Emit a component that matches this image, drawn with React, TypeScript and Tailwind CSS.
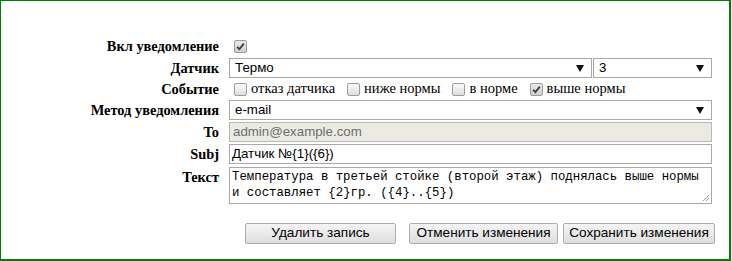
import React from "react";

const Check = ({ checked }: { checked?: boolean }) => (
  <span
    className={
      "inline-flex h-[13px] w-[13px] shrink-0 items-center justify-center rounded-[2px] border border-[#9c9c9c] " +
      (checked ? "bg-linear-to-b from-[#e8e8e8] to-[#cfcfcf]" : "bg-linear-to-b from-[#fbfbfb] to-[#dedede]")
    }
  >
    {checked && (
      <svg width="9" height="9" viewBox="0 0 9 9">
        <path d="M1.2 4.8 L3.4 7.2 L7.8 1.6" fill="none" stroke="#3a3a3a" strokeWidth="1.8" />
      </svg>
    )}
  </span>
);

const Arrow = () => (
  <svg width="8" height="7" viewBox="0 0 8 7" className="shrink-0">
    <path d="M0 0 H8 L4 7 Z" fill="#111" />
  </svg>
);

const Label = ({ children, className = "" }: { children: React.ReactNode; className?: string }) => (
  <div
    className={
      "w-[218px] shrink-0 text-right [font-family:'Liberation_Serif',serif] text-[14.4px] font-bold leading-[20px] text-black " +
      className
    }
  >
    {children}
  </div>
);

const Select = ({ value, className = "" }: { value: string; className?: string }) => (
  <div
    className={
      "flex h-[20px] items-center justify-between border border-[#a9a9a9] bg-white pl-[5px] pr-[7px] [font-family:'Liberation_Sans',Arial,sans-serif] text-[13.3px] text-black " +
      className
    }
  >
    <span>{value}</span>
    <Arrow />
  </div>
);

const Opt = ({ text, checked, first }: { text: string; checked?: boolean; first?: boolean }) => (
  <div className={"flex items-center " + (first ? "ml-[5px]" : "ml-[12px]")}>
    <Check checked={checked} />
    <span className="ml-[4px] [font-family:'Liberation_Serif',serif] text-[14.5px] text-black">{text}</span>
  </div>
);

const Btn = ({ text, className = "" }: { text: string; className?: string }) => (
  <div
    className={
      "flex h-[21px] items-center justify-center rounded-[2px] border border-[#adadad] bg-linear-to-b from-[#f5f5f5] to-[#dedede] [font-family:'Liberation_Sans',Arial,sans-serif] text-[13.6px] text-black " +
      className
    }
  >
    {text}
  </div>
);

export default function App() {
  return (
    <div className="box-border h-[261px] w-[731px] border-t border-l border-r-2 border-b-2 border-[#008000] bg-white pt-[35px]">
      <div className="flex h-[20px] items-center">
        <Label>Вкл уведомление</Label>
        <div className="ml-[15px] flex items-center">
          <Check checked />
        </div>
      </div>

      <div className="mt-[2px] flex h-[20px] items-center">
        <Label>Датчик</Label>
        <div className="ml-[10px] flex w-[483px] gap-[1px]">
          <Select value="Термо" className="w-[363px]" />
          <Select value="3" className="w-[119px] pl-[3px]" />
        </div>
      </div>

      <div className="mt-[1px] flex h-[20px] items-center">
        <Label>Событие</Label>
        <div className="ml-[10px] flex items-center">
          <Opt text="отказ датчика" first />
          <Opt text="ниже нормы" />
          <Opt text="в норме" />
          <Opt text="выше нормы" checked />
        </div>
      </div>

      <div className="mt-[1px] flex h-[20px] items-center">
        <Label>Метод уведомления</Label>
        <div className="ml-[10px]">
          <Select value="e-mail" className="w-[483px] pl-[3px]" />
        </div>
      </div>

      <div className="mt-[2px] flex h-[20px] items-center">
        <Label>To</Label>
        <div className="ml-[10px] flex h-[20px] w-[483px] items-center border border-[#b8b8b8] bg-[#ebebe4] pl-[3px] [font-family:'Liberation_Sans',Arial,sans-serif] text-[13.3px] text-[#6d6d6d]">
          admin@example.com
        </div>
      </div>

      <div className="mt-[2px] flex h-[20px] items-center">
        <Label>Subj</Label>
        <div className="ml-[10px] flex h-[20px] w-[483px] items-center border border-[#a9a9a9] bg-white pl-[2px] [font-family:'Liberation_Sans',Arial,sans-serif] text-[13.3px] text-black">
          Датчик №{"{1}"}({"{6}"})
        </div>
      </div>

      <div className="mt-[3px] flex h-[37px] items-start">
        <Label>Текст</Label>
        <div className="relative ml-[10px] h-[37px] w-[483px] border border-[#a9a9a9] bg-white pl-[2px] pt-[1px] [font-family:'Liberation_Mono',monospace] text-[12.35px] leading-[16px] text-black">
          <div>Температура в третьей стойке (второй этаж) поднялась выше нормы</div>
          <div>и составляет {"{2}"}гр. ({"{4}"}..{"{5}"})</div>
          <svg width="8" height="8" viewBox="0 0 8 8" className="absolute bottom-[1px] right-[1px]">
            <path d="M7 1 L1 7 M7 4 L4 7" stroke="#999" strokeWidth="1" />
          </svg>
        </div>
      </div>

      <div className="mt-[19px] flex">
        <Btn text="Удалить запись" className="ml-[244px] w-[151px]" />
        <Btn text="Отменить изменения" className="ml-[13px] w-[149px]" />
        <Btn text="Сохранить изменения" className="ml-[5px] w-[152px]" />
      </div>
    </div>
  );
}
